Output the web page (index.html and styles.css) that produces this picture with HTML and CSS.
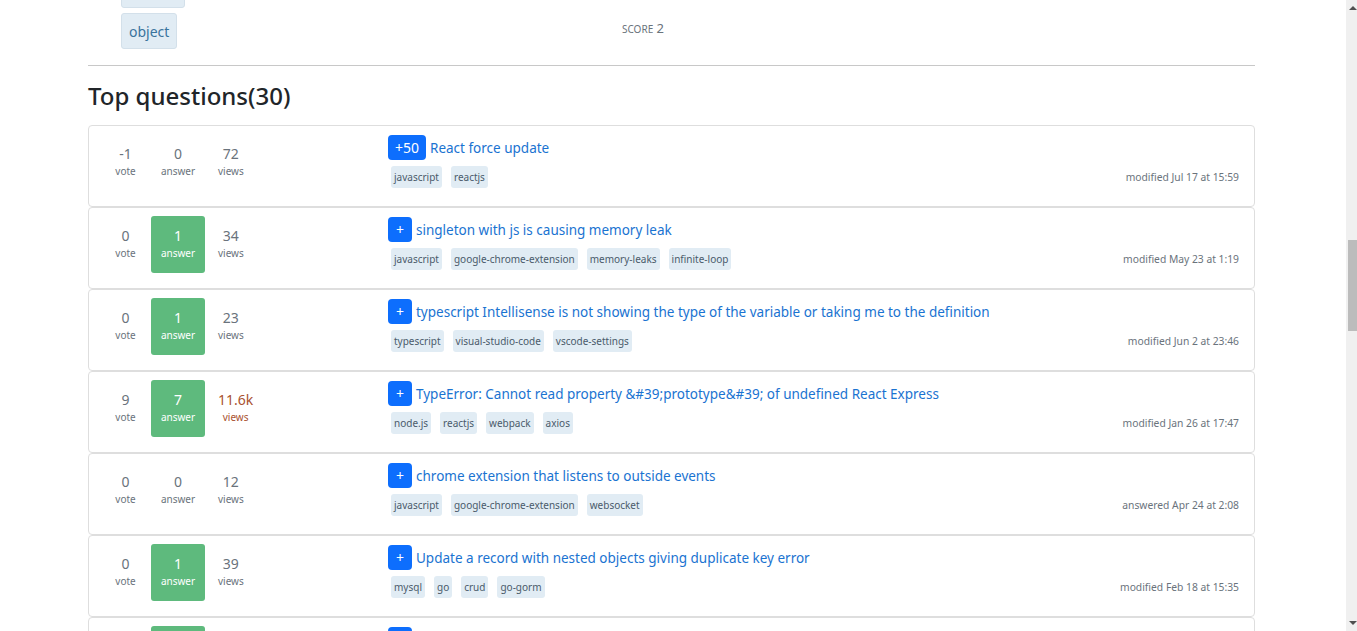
FILE: index.html
```html
<!DOCTYPE html>
<html lang="en">
<head>
<meta charset="utf-8">
<title>Top questions</title>
<link rel="stylesheet" href="styles.css">
</head>
<body>
<div class="page">
  <div class="container">
    <section class="top">
      <div class="top-tags">
        <a class="big-tag">closure</a>
        <a class="big-tag">object</a>
      </div>
      <div class="score"><span class="score-label">SCORE</span> 2</div>
    </section>
    <hr class="divider">
    <h2 class="heading">Top questions(30)</h2>
    <div class="list">
      <div class="card">
        <div class="stats">
          <div class="stat"><span class="num">-1</span><span class="lbl">vote</span></div>
          <div class="stat"><span class="num">0</span><span class="lbl">answer</span></div>
          <div class="stat views"><span class="num">72</span><span class="lbl">views</span></div>
        </div>
        <div class="main">
          <div class="title-row"><span class="bounty">+50</span><a class="title">React force update</a></div>
          <div class="meta-row">
            <div class="tags"><span class="tag">javascript</span><span class="tag">reactjs</span></div>
            <span class="date">modified Jul 17 at 15:59</span>
          </div>
        </div>
      </div>
      <div class="card">
        <div class="stats">
          <div class="stat"><span class="num">0</span><span class="lbl">vote</span></div>
          <div class="stat answered"><span class="num">1</span><span class="lbl">answer</span></div>
          <div class="stat views"><span class="num">34</span><span class="lbl">views</span></div>
        </div>
        <div class="main">
          <div class="title-row"><span class="bounty">+</span><a class="title">singleton with js is causing memory leak</a></div>
          <div class="meta-row">
            <div class="tags"><span class="tag">javascript</span><span class="tag">google-chrome-extension</span><span class="tag">memory-leaks</span><span class="tag">infinite-loop</span></div>
            <span class="date">modified May 23 at 1:19</span>
          </div>
        </div>
      </div>
      <div class="card">
        <div class="stats">
          <div class="stat"><span class="num">0</span><span class="lbl">vote</span></div>
          <div class="stat answered"><span class="num">1</span><span class="lbl">answer</span></div>
          <div class="stat views"><span class="num">23</span><span class="lbl">views</span></div>
        </div>
        <div class="main">
          <div class="title-row"><span class="bounty">+</span><a class="title">typescript Intellisense is not showing the type of the variable or taking me to the definition</a></div>
          <div class="meta-row">
            <div class="tags"><span class="tag">typescript</span><span class="tag">visual-studio-code</span><span class="tag">vscode-settings</span></div>
            <span class="date">modified Jun 2 at 23:46</span>
          </div>
        </div>
      </div>
      <div class="card">
        <div class="stats">
          <div class="stat"><span class="num">9</span><span class="lbl">vote</span></div>
          <div class="stat answered"><span class="num">7</span><span class="lbl">answer</span></div>
          <div class="stat views hot"><span class="num">11.6k</span><span class="lbl">views</span></div>
        </div>
        <div class="main">
          <div class="title-row"><span class="bounty">+</span><a class="title">TypeError: Cannot read property &amp;#39;prototype&amp;#39; of undefined React Express</a></div>
          <div class="meta-row">
            <div class="tags"><span class="tag">node.js</span><span class="tag">reactjs</span><span class="tag">webpack</span><span class="tag">axios</span></div>
            <span class="date">modified Jan 26 at 17:47</span>
          </div>
        </div>
      </div>
      <div class="card">
        <div class="stats">
          <div class="stat"><span class="num">0</span><span class="lbl">vote</span></div>
          <div class="stat"><span class="num">0</span><span class="lbl">answer</span></div>
          <div class="stat views"><span class="num">12</span><span class="lbl">views</span></div>
        </div>
        <div class="main">
          <div class="title-row"><span class="bounty">+</span><a class="title">chrome extension that listens to outside events</a></div>
          <div class="meta-row">
            <div class="tags"><span class="tag">javascript</span><span class="tag">google-chrome-extension</span><span class="tag">websocket</span></div>
            <span class="date">answered Apr 24 at 2:08</span>
          </div>
        </div>
      </div>
      <div class="card">
        <div class="stats">
          <div class="stat"><span class="num">0</span><span class="lbl">vote</span></div>
          <div class="stat answered"><span class="num">1</span><span class="lbl">answer</span></div>
          <div class="stat views"><span class="num">39</span><span class="lbl">views</span></div>
        </div>
        <div class="main">
          <div class="title-row"><span class="bounty">+</span><a class="title">Update a record with nested objects giving duplicate key error</a></div>
          <div class="meta-row">
            <div class="tags"><span class="tag">mysql</span><span class="tag">go</span><span class="tag">crud</span><span class="tag">go-gorm</span></div>
            <span class="date">modified Feb 18 at 15:35</span>
          </div>
        </div>
      </div>
      <div class="card">
        <div class="stats">
          <div class="stat"><span class="num">2</span><span class="lbl">vote</span></div>
          <div class="stat answered"><span class="num">2</span><span class="lbl">answer</span></div>
          <div class="stat views"><span class="num">58</span><span class="lbl">views</span></div>
        </div>
        <div class="main">
          <div class="title-row"><span class="bounty">+</span><a class="title">How to debounce input in a React functional component</a></div>
          <div class="meta-row">
            <div class="tags"><span class="tag">javascript</span><span class="tag">reactjs</span></div>
            <span class="date">modified Jan 9 at 11:20</span>
          </div>
        </div>
      </div>
    </div>
  </div>
</div>
<div class="scrollbar" aria-hidden="true">
  <span class="arrow-up"></span>
  <span class="thumb"></span>
  <span class="arrow-down"></span>
</div>
</body>
</html>
```

FILE: styles.css
```css
* { box-sizing: border-box; }
html, body { margin: 0; padding: 0; }
body {
  font-family: "Noto Sans", "Open Sans", Arial, sans-serif;
  color: #212529;
  background: #fff;
  overflow: hidden;
  height: 631px;
}
.page { padding-right: 11px; }
.container {
  width: 1167px;
  margin-left: 88px;
}
.top {
  display: flex;
  margin-top: -28px;
}
.top-tags {
  display: flex;
  flex-direction: column;
  align-items: flex-start;
  gap: 5px;
  padding-left: 33px;
  width: 534px;
}
.big-tag {
  display: inline-flex;
  align-items: center;
  height: 36px;
  padding: 0 7px;
  font-size: 14px;
  color: #39739d;
  background: #e1ecf4;
  border: 1px solid #d3e0ea;
  border-radius: 3px;
}
.score {
  align-self: flex-end;
  padding-bottom: 12px;
  font-size: 13px;
  color: #6a737c;
}
.score-label { font-size: 10px; }
.divider {
  border: 0;
  border-top: 1px solid #c8c8c8;
  margin: 16px 0 0;
}
.heading {
  margin: 15px 0 15px;
  font-size: 24px;
  font-weight: 500;
  line-height: 29px;
  color: #212529;
}
.list { display: flex; flex-direction: column; }
.card {
  display: grid;
  grid-template-columns: 299px 1fr;
  height: 82px;
  padding: 8px 15px 0 0;
  border: 1px solid #dedede;
  border-radius: 4px;
}
.stats {
  display: grid;
  grid-template-columns: 51px 54px auto;
  justify-content: start;
  padding-left: 11px;
  align-items: start;
}
.stat {
  height: 57px;
  display: flex;
  flex-direction: column;
  align-items: center;
  justify-content: center;
  padding-bottom: 2px;
  color: #6a737c;
  border-radius: 3px;
}
.stat.views { padding: 0 13px 2px; }
.num { font-size: 14px; line-height: 18px; }
.lbl { font-size: 10px; line-height: 16px; }
.stat.answered { background: #5eba7d; color: #fff; }
.stat.hot { color: #a9512f; }
.main {
  display: flex;
  flex-direction: column;
  padding-top: 1px;
}
.title-row {
  display: flex;
  align-items: center;
  gap: 4px;
  height: 25px;
}
.bounty {
  display: inline-flex;
  align-items: center;
  justify-content: center;
  min-width: 24px;
  height: 25px;
  padding: 0 7px;
  background: #0d6efd;
  color: #fff;
  border-radius: 4px;
  font-size: 14px;
}
.title {
  font-size: 13.5px;
  color: #1a73d1;
  white-space: nowrap;
}
.meta-row {
  display: flex;
  justify-content: space-between;
  align-items: center;
  margin-top: 6px;
}
.tags { display: flex; gap: 9px; padding-left: 3px; }
.tag {
  display: inline-flex;
  align-items: center;
  height: 22px;
  padding: 0 3px;
  font-size: 10px;
  color: #4a5b6b;
  background: #e1ecf4;
  border-radius: 3px;
}
.date {
  font-size: 10.3px;
  color: #6a737c;
}
.scrollbar {
  position: fixed;
  top: 0;
  right: 0;
  width: 11px;
  height: 631px;
  background: #f0f0f0;
}
.thumb {
  position: absolute;
  left: 2px;
  top: 240px;
  width: 9px;
  height: 91px;
  background: #bcbcbc;
}
.arrow-up, .arrow-down {
  position: absolute;
  left: 3px;
  width: 0;
  height: 0;
  border-left: 4px solid transparent;
  border-right: 4px solid transparent;
}
.arrow-up { top: 6px; border-bottom: 4px solid #505050; }
.arrow-down { bottom: 6px; border-top: 4px solid #505050; }
```
